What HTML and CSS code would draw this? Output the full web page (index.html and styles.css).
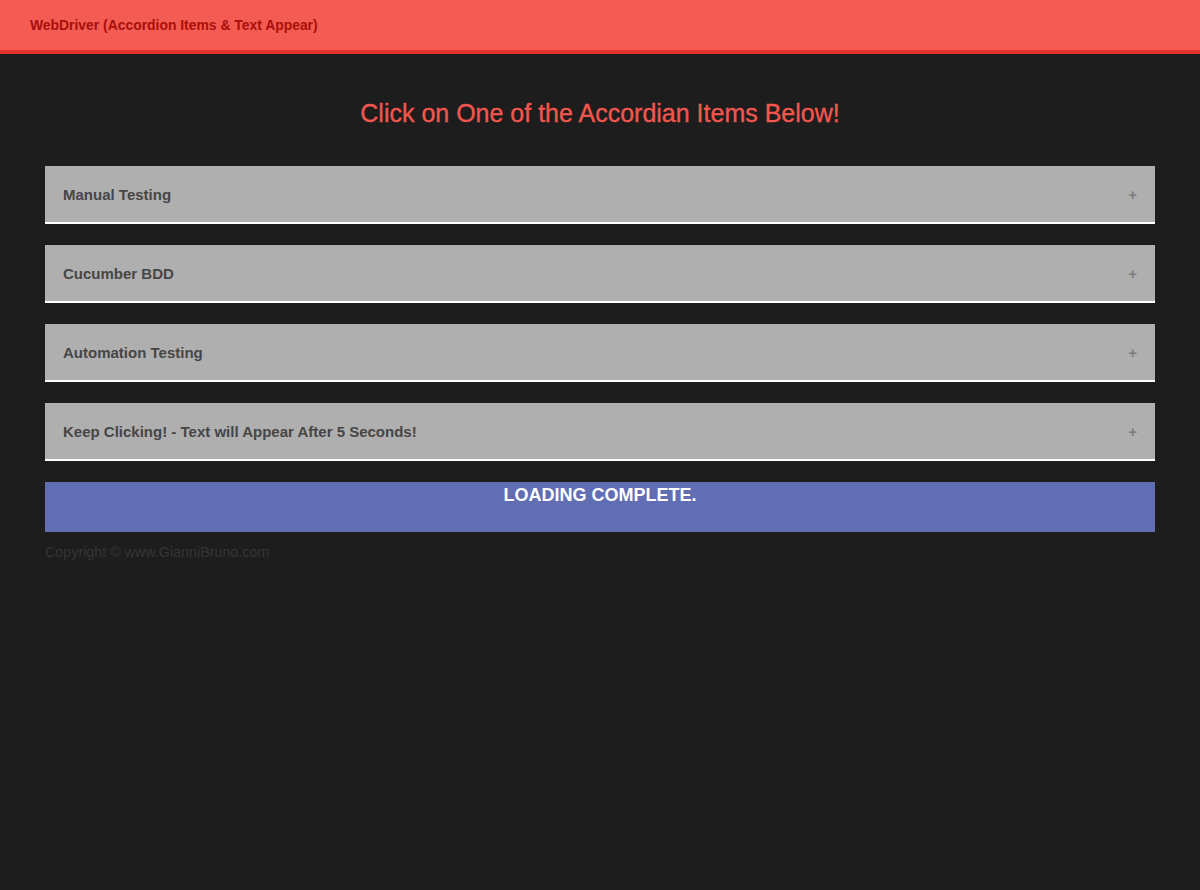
FILE: index.html
```html
<!DOCTYPE html>
<html>
<head>
<meta charset="utf-8">
<link rel="stylesheet" href="styles.css">
</head>
<body>
<header class="topbar">
  <span class="brand">WebDriver (Accordion Items &amp; Text Appear)</span>
</header>
<main class="container">
  <h1 class="title">Click on One of the Accordian Items Below!</h1>
  <div class="accordion">
    <div class="acc-item"><span>Manual Testing</span><span class="plus">+</span></div>
    <div class="acc-item"><span>Cucumber BDD</span><span class="plus">+</span></div>
    <div class="acc-item"><span>Automation Testing</span><span class="plus">+</span></div>
    <div class="acc-item"><span>Keep Clicking! - Text will Appear After 5 Seconds!</span><span class="plus">+</span></div>
  </div>
  <div class="loading">LOADING COMPLETE.</div>
  <p class="copyright">Copyright © www.GianniBruno.com</p>
</main>
</body>
</html>
```
FILE: styles.css
```css
* { box-sizing: border-box; }
html, body { margin: 0; padding: 0; }
body {
  background: #1d1d1d;
  font-family: "Liberation Sans", Arial, sans-serif;
  min-height: 890px;
}
.topbar {
  height: 54px;
  background: #f45b52;
  border-bottom: 4px solid #e5342b;
  display: flex;
  align-items: center;
  padding: 0 30px;
}
.brand {
  color: #a8100c;
  font-weight: bold;
  font-size: 13.9px;
}
.container {
  padding: 0 45px;
}
.title {
  margin: 45px 0 39px;
  text-align: center;
  color: #f2574f;
  font-size: 25px;
  font-weight: normal;
  line-height: 28px;
  -webkit-text-stroke: 0.35px #f2574f;
}
.accordion {
  display: flex;
  flex-direction: column;
  gap: 21px;
}
.acc-item {
  height: 58px;
  background: #afafaf;
  border-bottom: 2px solid #ffffff;
  display: flex;
  align-items: center;
  justify-content: space-between;
  padding: 0 18px;
  color: #464646;
  font-weight: bold;
  font-size: 15px;
}
.plus {
  color: #7c7c7c;
  font-size: 15px;
  font-weight: bold;
}
.loading {
  margin-top: 21px;
  height: 50px;
  background: #616eb3;
  color: #ffffff;
  font-weight: bold;
  font-size: 18px;
  text-align: center;
  padding-top: 2px;
  line-height: 22px;
}
.copyright {
  margin: 12px 0 0;
  color: #353535;
  font-size: 14.3px;
  line-height: 16px;
}
```
